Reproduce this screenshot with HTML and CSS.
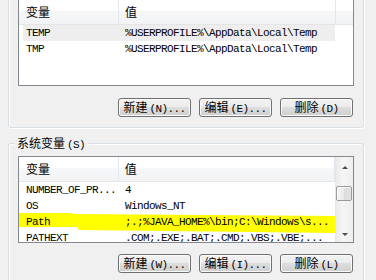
FILE: index.html
```html
<!DOCTYPE html>
<html lang="zh-CN">
<head>
    <meta charset="UTF-8">
    <title>环境变量</title>
    <link rel="stylesheet" href="styles.css">
</head>
<body>
    <div class="dialog">
        <div class="group group-user">
            <div class="list">
                <div class="list-main">
                    <div class="list-head">
                        <div class="col col-name"><span class="cn">变量</span></div>
                        <div class="col col-value"><span class="cn">值</span></div>
                        <div class="col col-fill"></div>
                    </div>
                    <div class="row row-focus"><span class="cell cell-name">TEMP</span><span class="cell">%USERPROFILE%\AppData\Local\Temp</span></div>
                    <div class="row"><span class="cell cell-name">TMP</span><span class="cell">%USERPROFILE%\AppData\Local\Temp</span></div>
                </div>
            </div>
            <div class="buttons">
                <button class="btn"><span class="cn">新建</span>(N)...</button>
                <button class="btn"><span class="cn">编辑</span>(E)...</button>
                <button class="btn"><span class="cn">删除</span>(D)</button>
            </div>
        </div>

        <div class="group group-system">
            <div class="group-title"><span class="cn">系统变量</span>(S)</div>
            <div class="list">
                <div class="list-main">
                    <div class="list-head">
                        <div class="col col-name"><span class="cn">变量</span></div>
                        <div class="col col-value"><span class="cn">值</span></div>
                    </div>
                    <div class="row"><span class="cell cell-name">NUMBER_OF_PR...</span><span class="cell">4</span></div>
                    <div class="row"><span class="cell cell-name">OS</span><span class="cell">Windows_NT</span></div>
                    <div class="row row-marked"><span class="cell cell-name">Path</span><span class="cell">;.;%JAVA_HOME%\bin;C:\Windows\s...</span></div>
                    <div class="row"><span class="cell cell-name">PATHEXT</span><span class="cell">.COM;.EXE;.BAT;.CMD;.VBS;.VBE;...</span></div>
                </div>
                <div class="scrollbar">
                    <div class="arrow-btn"><span class="arrow arrow-up"></span></div>
                    <div class="thumb"></div>
                    <div class="track"></div>
                    <div class="arrow-btn"><span class="arrow arrow-down"></span></div>
                </div>
            </div>
            <div class="buttons">
                <button class="btn"><span class="cn">新建</span>(W)...</button>
                <button class="btn"><span class="cn">编辑</span>(I)...</button>
                <button class="btn"><span class="cn">删除</span>(L)</button>
            </div>
        </div>
    </div>
</body>
</html>
```

FILE: styles.css
```css
body, html {
    margin: 0;
    padding: 0;
    height: 100%;
    overflow: hidden;
}
body {
    background: #f0f0f0;
    color: #000;
    font-family: "Liberation Mono", "Noto Sans CJK SC", monospace;
    font-size: 11px;
    letter-spacing: -0.6px;
}
.cn {
    font-family: "Noto Sans CJK SC", sans-serif;
    font-size: 12px;
    letter-spacing: 0;
}
.dialog {
    width: 356px;
    padding-left: 8px;
}
.group {
    position: relative;
    border: 1px solid #d5dfe5;
    border-radius: 3px;
    box-shadow: inset 1px 1px #fff, 1px 1px #fff;
    padding: 0 9px 10px;
}
.group-user {
    margin-top: -30px;
    padding-top: 28px;
}
/* runs off the bottom of the window, so no bottom edge */
.group-system {
    margin-top: 15px;
    padding-top: 12px;
    padding-bottom: 0;
    height: 124px;
    border-bottom: 0;
    border-radius: 3px 3px 0 0;
}
.group-title {
    position: absolute;
    top: -7px;
    left: 5px;
    padding: 0 3px;
    line-height: 12px;
    background: #f0f0f0;
    white-space: nowrap;
}
.group-title .cn,
.btn .cn {
    margin-right: 2px;
}
.list {
    display: flex;
    height: 85px;
    border: 1px solid #828790;
    background: #fff;
    overflow: hidden;
}
.list-main {
    flex: 1;
    min-width: 0;
}
.list-head {
    display: flex;
    height: 24px;
    border-bottom: 1px solid #e5e5e5;
    background: linear-gradient(#ffffff 45%, #f6f7f9 45%, #f2f3f5);
}
.col {
    line-height: 24px;
    border-right: 1px solid #e3e8ee;
}
.col-name {
    width: 92px;
    padding-left: 7px;
}
.col-value {
    width: 210px;
    padding-left: 6px;
}
.col-fill {
    flex: 1;
    border-right: 0;
}
.row {
    position: relative;
    display: flex;
    width: 316px;
    height: 16px;
    line-height: 16px;
    white-space: nowrap;
}
.cell {
    position: relative;
    padding-left: 6px;
}
.cell-name {
    width: 93px;
    padding-left: 7px;
}
.row-focus {
    background: linear-gradient(to right, transparent 4px, #eeeeee 4px);
}
.row-marked::before {
    content: "";
    position: absolute;
    left: 0;
    top: -1px;
    width: 316px;
    height: 21px;
    background: #ffff00;
    clip-path: polygon(0 0, 53px 0, 55px 1px, 100% 3px, 100% 20px, 60px 17px, 58px 14px, 0 14px);
}
.scrollbar {
    display: flex;
    flex-direction: column;
    width: 17px;
    border-left: 1px solid #e6e6e6;
    background: linear-gradient(to right, #ebebeb, #f5f5f5 40%, #eeeeee);
}
.arrow-btn {
    display: flex;
    align-items: center;
    justify-content: center;
    height: 17px;
}
.arrow {
    width: 0;
    height: 0;
    border-left: 3px solid transparent;
    border-right: 3px solid transparent;
}
.arrow-up {
    border-bottom: 3px solid #4d4d4d;
    margin-top: 4px;
}
.arrow-down {
    border-top: 3px solid #4d4d4d;
    margin-top: 2px;
}
.thumb {
    height: 13px;
    margin: 12px 1px 0 0;
    border: 1px solid #9a9a9a;
    border-radius: 2px;
    background: linear-gradient(to right, #f4f4f4, #e9e9e9 50%, #dcdcdc 50%, #e2e2e2);
    box-shadow: inset 1px 1px #fff;
}
.track {
    flex: 1;
}
.buttons {
    display: flex;
    justify-content: flex-end;
    gap: 8px;
    margin-top: 12px;
    padding-right: 1px;
}
.group-system .buttons {
    margin-top: 11px;
}
.btn {
    width: 73px;
    height: 19px;
    padding: 0;
    border: 1px solid #707070;
    border-radius: 3px;
    background: linear-gradient(#f2f2f2, #ebebeb 50%, #dddddd 50%, #cfcfcf);
    box-shadow: inset 0 0 0 1px #fbfbfb;
    color: #000;
    font: inherit;
    letter-spacing: inherit;
    line-height: 15px;
    white-space: nowrap;
}
```
